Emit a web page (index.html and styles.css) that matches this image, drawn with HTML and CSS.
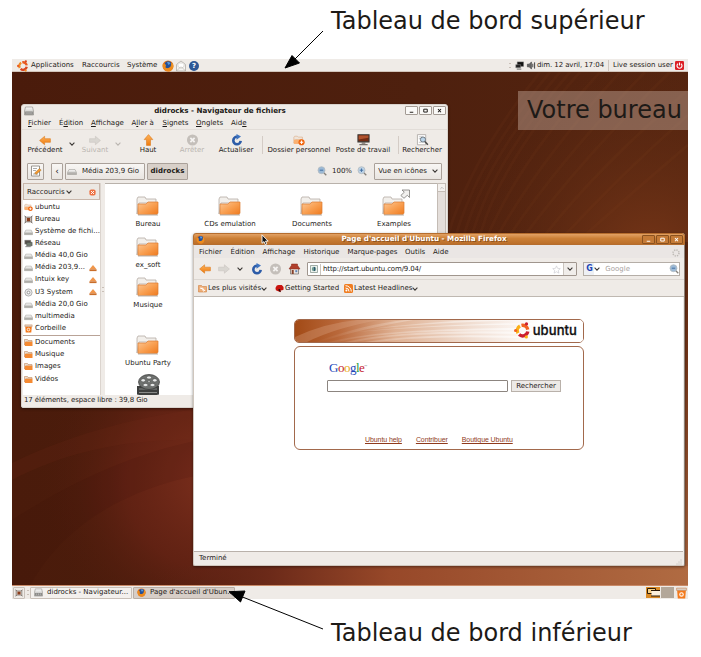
FILE: index.html
```html
<!DOCTYPE html>
<html lang="fr">
<head>
<meta charset="utf-8">
<title>Le bureau Ubuntu</title>
<link rel="stylesheet" href="styles.css">
</head>
<body>
<svg class="sprite" width="0" height="0">
  <defs>
    <linearGradient id="gFolder" x1="0" y1="0" x2="1" y2="1"><stop offset="0" stop-color="#fbc795"/><stop offset=".5" stop-color="#f9a052"/><stop offset="1" stop-color="#ee7a1e"/></linearGradient>
    <linearGradient id="gDrive" x1="0" y1="0" x2="0" y2="1"><stop offset="0" stop-color="#fafafa"/><stop offset="1" stop-color="#b5b3ae"/></linearGradient>
    <linearGradient id="gArrow" x1="0" y1="0" x2="0" y2="1"><stop offset="0" stop-color="#fdb35c"/><stop offset="1" stop-color="#ef7a0c"/></linearGradient>
    <linearGradient id="gBanner" x1="0" y1="0" x2="1" y2="0"><stop offset="0" stop-color="#a24a16"/><stop offset=".15" stop-color="#b9683a"/><stop offset=".35" stop-color="#dfb193"/><stop offset=".6" stop-color="#f0dccf"/><stop offset=".85" stop-color="#fff"/></linearGradient>
    <linearGradient id="gRay" x1="0" y1="0" x2="1" y2="0"><stop offset="0" stop-color="#fff" stop-opacity="0"/><stop offset=".4" stop-color="#fff" stop-opacity=".3"/><stop offset="1" stop-color="#fff" stop-opacity=".8"/></linearGradient>
  </defs>
  <symbol id="folder" viewBox="0 0 24 20"><path d="M2 18V3l1-2h7l1 2h10v4H4z" fill="#f2efeb" stroke="#b5aca4" stroke-width=".8"/><path d="M3 8h8l2-2h10v11l-1 1.500H3z" fill="url(#gFolder)" stroke="#dd7b30" stroke-width=".7"/><path d="M3 19h20" stroke="#b9b2aa"/></symbol>
  <symbol id="folder-s" viewBox="0 0 9 9"><path d="M.5 7V1.500h3l.5 1h4V4H2z" fill="#e9ddd2" stroke="#c08a60" stroke-width=".6"/><path d="M1 3.800h7.500V8H.8z" fill="#f58a32"/></symbol>
  <symbol id="home" viewBox="0 0 14 12"><path d="M1 9V2l1-1h3l1 1h5v3H3z" fill="#eee4da" stroke="#d7a377" stroke-width=".6"/><path d="M1 5h10v5H1z" fill="#fab071"/><circle cx="10" cy="8" r="3.600" fill="#f0640c"/><path d="M8 8h4M10 6v4" stroke="#fff" stroke-width="1.200"/></symbol>
  <symbol id="drive" viewBox="0 0 10 9"><path d="M2 3h6l1.500 3v2h-9V6z" fill="url(#gDrive)" stroke="#a09e99" stroke-width=".6"/><path d="M1 6.500h8" stroke="#8d8b87" stroke-width=".6"/></symbol>
  <symbol id="cabinet" viewBox="0 0 10 10"><path d="M1.500 1h7L9.500 5v4h-9V5z" fill="url(#gDrive)" stroke="#8a8884" stroke-width=".6"/><path d="M1.200 5.500h7.600v3H1.200z" fill="#878683"/><path d="M3 6v2M5 6v2M7 6v2" stroke="#ccc" stroke-width=".7"/></symbol>
  <symbol id="desk" viewBox="0 0 10 9"><path d="M1 1h8v7H1z" fill="#eceae6"/><path d="M.5.5l2 1.500h5l2-1.500M.5 8.500L2.500 7h5l2 1.500M1.500 1v7M8.500 1v7" fill="none" stroke="#6d625b" stroke-width=".9"/><path d="M3 2.800h4v3.600H3z" fill="#8a3d1b"/></symbol>
  <symbol id="net" viewBox="0 0 10 9"><path d="M.7.7h7v4.600h-7z" fill="#55504b" stroke="#bbb" stroke-width=".5"/><path d="M3 3.200h6v3.800H3z" fill="#6f7a6c" stroke="#444" stroke-width=".6"/><path d="M1.500 8h6" stroke="#777"/></symbol>
  <symbol id="disc" viewBox="0 0 10 10"><circle cx="5" cy="5" r="4" fill="#e8e8e8" stroke="#a3a3a3" stroke-width=".9"/><circle cx="5" cy="5" r="1.500" fill="#fff" stroke="#888" stroke-width=".9"/></symbol>
  <symbol id="trash" viewBox="0 0 10 11"><path d="M1 3h8L8.400 10.500H1.600z" fill="#f47a1c"/><path d="M.5 1h9v2.200h-9z" fill="#d9cfc6" stroke="#c77b45" stroke-width=".5"/><circle cx="5" cy="6.800" r="1.600" fill="none" stroke="#fff" stroke-width="1"/></symbol>
  <symbol id="eject" viewBox="0 0 9 9"><path d="M4.500 1L8.500 6h-8z" fill="#f0964b"/><path d="M.5 6h8V8h-8z" fill="#c96d29"/></symbol>
  <symbol id="left" viewBox="0 0 12 10"><path d="M.6 5L5.600.8v2.400h5.800v3.600H5.600v2.400z" fill="url(#gArrow)" stroke="#dc7a1c" stroke-width=".6"/></symbol>
  <symbol id="right-off" viewBox="0 0 12 10"><path d="M11.400 5L6.400.8v2.400H.6v3.600h5.800v2.400z" fill="#d9d6d1" stroke="#c9c5bf" stroke-width=".6"/></symbol>
  <symbol id="up" viewBox="0 0 10 12"><path d="M5 .6L9.300 5.600H7v5.800H3V5.600H.7z" fill="url(#gArrow)" stroke="#dc7a1c" stroke-width=".6"/></symbol>
  <symbol id="stop-off" viewBox="0 0 13 13"><circle cx="6.500" cy="6.500" r="6" fill="#c4bfba"/><path d="M4.200 4.200l4.600 4.600M8.800 4.200L4.200 8.800" stroke="#f5f3f1" stroke-width="1.900"/></symbol>
  <symbol id="reload" viewBox="0 0 12 12"><path d="M6.500 2.800a3.700 3.700 0 1 0 3.700 4" fill="none" stroke="#2d5ca8" stroke-width="2.600"/><path d="M6 0v5.800L10.500 2.600z" fill="#3f74c0"/></symbol>
  <symbol id="monitor" viewBox="0 0 14 13"><path d="M1 .8h12v7.700H1z" fill="#742c14" stroke="#3b3835" stroke-width="1.200"/><path d="M1.800 1.500h10.500v2.500L1.800 6z" fill="#b0522d"/><path d="M5 9h4v1.500H5zM2.500 10.800h9v1.400h-9z" fill="#77716b"/></symbol>
  <symbol id="find" viewBox="0 0 13 13"><path d="M1 .7h9v11H1z" fill="#fff" stroke="#a39e99" stroke-width=".8"/><path d="M2.500 3h4M2.500 5h2M2.500 9h3" stroke="#aaa" stroke-width=".7"/><circle cx="7" cy="6" r="2.800" fill="#b9d3e8" stroke="#68727b" stroke-width="1"/><path d="M9 8l3.300 3.700" stroke="#4b4b4b" stroke-width="1.600"/></symbol>
  <symbol id="zoom" viewBox="0 0 10 10"><circle cx="4.500" cy="4.200" r="3.500" fill="#9bb9d6" stroke="#b3babf" stroke-width=".8"/><path d="M7 7l2.300 2.200" stroke="#85807a" stroke-width="1.300"/><path d="M2.800 4.200h3.400" stroke="#4571a3"/></symbol>
  <symbol id="zoom-in" viewBox="0 0 10 10"><circle cx="4.500" cy="4.200" r="3.500" fill="#bcd2e6" stroke="#b3babf" stroke-width=".8"/><path d="M7 7l2.300 2.200" stroke="#85807a" stroke-width="1.300"/><path d="M2.800 4.200h3.400M4.500 2.500v3.400" stroke="#4571a3"/></symbol>
  <symbol id="edit" viewBox="0 0 12 12"><path d="M1.500 1h8v10h-8z" fill="#fff" stroke="#8f8a84" stroke-width=".9"/><path d="M3 3.500h4M3 5.500h3M3 9h5" stroke="#888" stroke-width=".7"/><path d="M4.500 8l5-4.500 1.700 1.700L6 9.500z" fill="#f3962f" stroke="#8c6a2a" stroke-width=".4"/></symbol>
  <symbol id="chev" viewBox="0 0 6 4"><path d="M.6.7L3 3.100 5.400.7" fill="none" stroke="currentColor" stroke-width="1.100"/></symbol>
  <symbol id="close-o" viewBox="0 0 8 8"><rect x=".5" y=".5" width="7" height="7" rx="2" fill="#ee7040"/><path d="M2.300 2.300l3.400 3.400M5.700 2.300L2.300 5.700" stroke="#fff" stroke-width="1.100"/></symbol>
  <symbol id="firefox" viewBox="0 0 12 12"><circle cx="6" cy="6" r="5.500" fill="#e2731a"/><circle cx="6.200" cy="4.900" r="3.600" fill="#24509a"/><path d="M5 2.200c2-.7 3 .2 3.500 1.300L6.500 5z" fill="#5c9ad8"/><path d="M.8 4c1.400-.6 2.700.2 3.200 1.200L3.400 7.400c1.500 1.400 4.300.8 5.400-1.300L9.500 2.200C12.500 5 11.600 9.500 8 11.200 3.500 12.300 0 8.500.8 4z" fill="#ed8b1e"/><path d="M10 3c1.400 2.500.4 5-1.300 6.200C11 7.500 10.500 5 10 3z" fill="#fbd34c"/></symbol>
  <symbol id="ubuntu" viewBox="0 0 20 20"><g fill="none" stroke-width="4"><path d="M4.700 13A6.200 6.200 0 0 1 7 4.600" stroke="#fbb016"/><path d="M8.800 4A6.200 6.200 0 0 1 16.200 9" stroke="#f26322"/><path d="M16.200 11.200A6.200 6.200 0 0 1 6 14.800" stroke="#cc1f2f"/></g><circle cx="1.900" cy="10" r="1.900" fill="#f26322"/><circle cx="14.700" cy="2.300" r="1.900" fill="#cc1f2f"/><circle cx="14.500" cy="17.600" r="1.900" fill="#fbb016"/></symbol>
  <symbol id="ubuntu-o" viewBox="0 0 20 20"><g fill="none" stroke-width="4"><path d="M4.700 13A6.200 6.200 0 0 1 7 4.600" stroke="#f08a24"/><path d="M8.800 4A6.200 6.200 0 0 1 16.200 9" stroke="#ea5a20"/><path d="M16.200 11.200A6.200 6.200 0 0 1 6 14.800" stroke="#d9431f"/></g><circle cx="1.900" cy="10" r="1.900" fill="#ea5a20"/><circle cx="14.700" cy="2.300" r="1.900" fill="#d9431f"/><circle cx="14.500" cy="17.600" r="1.900" fill="#f08a24"/></symbol>
  <symbol id="mail" viewBox="0 0 11 12"><path d="M1 4.500L5.500 1 10 4.500V11H1z" fill="#f5f4f2" stroke="#b1ada8" stroke-width=".8"/><path d="M2.500 3h6v3.500l-3 2-3-2z" fill="#fff" stroke="#c3bfba" stroke-width=".6"/><path d="M1 11l4-4h1l4 4" fill="none" stroke="#b8b4af" stroke-width=".7"/></symbol>
  <symbol id="speaker" viewBox="0 0 10 10"><path d="M1 3.500h2L5.500 1v8L3 6.500H1z" fill="#666" stroke="#333" stroke-width=".6"/><path d="M7 3v4M9 1.500v7" stroke="#333" stroke-width="1"/></symbol>
  <symbol id="screens" viewBox="0 0 10 10"><path d="M2.500 1h7v5h-7z" fill="#111" stroke="#777" stroke-width=".5"/><path d="M.8 4h5.500v3.500H.8z" fill="#222" stroke="#999" stroke-width=".5"/><path d="M2 9h5" stroke="#777" stroke-width="1.200"/></symbol>
  <symbol id="power" viewBox="0 0 9 9"><rect width="9" height="9" rx="1.200" fill="#dc1f24"/><path d="M3 2.800a2.500 2.500 0 1 0 3 0M4.500 1.500v3" fill="none" stroke="#fff" stroke-width="1.100"/></symbol>
  <symbol id="house" viewBox="0 0 12 12"><path d="M2 5.500h8V11H2z" fill="#eee8e2" stroke="#6f6761" stroke-width=".7"/><path d="M.5 6L3 2.300V1h6v1.300L11.500 6z" fill="#b0402c" stroke="#87291b" stroke-width=".5"/><path d="M3.200 7h2v4h-2z" fill="#85412a"/><path d="M6.800 7.200h2v2h-2z" fill="#5e84b5"/></symbol>
  <symbol id="rss" viewBox="0 0 9 9"><rect width="9" height="9" rx="1.500" fill="#f07c1f"/><circle cx="2.400" cy="6.600" r="1" fill="#fff"/><path d="M1.500 4a3.500 3.500 0 0 1 3.500 3.500M1.500 1.700a5.800 5.800 0 0 1 5.800 5.800" fill="none" stroke="#fff" stroke-width="1"/></symbol>
  <symbol id="feedfolder" viewBox="0 0 9 9"><path d="M.5 8V1.500h3l1 1h4V8z" fill="#efaf79" stroke="#cf7f42" stroke-width=".6"/><path d="M2 4a3.500 3.500 0 0 1 3.500 3.500M4 3.500l3 3.500" fill="none" stroke="#fff"/></symbol>
  <symbol id="mozilla" viewBox="0 0 10 9"><path d="M.5 4L2 1.200 4 .5h3.500l2 2.300v3L8 6.500l-2 .3.500 1.900-3-1.200L1 6.500z" fill="#c9140f"/><path d="M3.500 5.500l2-.5 1 3.500-2-1z" fill="#2b0a08"/></symbol>
  <symbol id="reel" viewBox="0 0 26 22"><path d="M2 12h22v8.500c-6 1.500-16 1.500-22 0z" fill="#3d3f3e"/><path d="M4 15h18M4 18.500h18" stroke="#898b89" stroke-width="1"/><ellipse cx="14" cy="8" rx="10.500" ry="7.500" fill="#6e716f" stroke="#333" stroke-width=".7"/><g fill="#e7e9e8" stroke="#444" stroke-width=".5"><ellipse cx="14" cy="3.500" rx="2.500" ry="1.500"/><ellipse cx="8.200" cy="6.300" rx="2.300" ry="1.600"/><ellipse cx="19.800" cy="6.300" rx="2.300" ry="1.600"/><ellipse cx="10.500" cy="11" rx="2.500" ry="1.600"/><ellipse cx="17.500" cy="11" rx="2.500" ry="1.600"/><circle cx="14" cy="7.500" r="1"/></g></symbol>
  <symbol id="link" viewBox="0 0 10 10"><path d="M2 1h7.500v7.500L7.300 6.300 4 9.300.8 6.500 4.300 3.200z" fill="#f1f0ee" stroke="#6d6b68" stroke-width=".7"/></symbol>
  <symbol id="min" viewBox="0 0 8 8"><path d="M2 6h4" stroke="currentColor" stroke-width="1.100"/></symbol>
  <symbol id="max" viewBox="0 0 8 8"><path d="M2 2.500h4v3.300H2z" fill="none" stroke="currentColor" stroke-width="1.100"/></symbol>
  <symbol id="cls" viewBox="0 0 8 8"><path d="M2.300 2.300l3.400 3.700M5.700 2.300L2.300 6" stroke="currentColor" stroke-width="1.200"/></symbol>
</svg>

<main class="desktop">
  <header class="panel panel-top">
    <svg class="i12 distro"><use href="#ubuntu-o"/></svg>
    <nav class="panel-menu"><span>Applications</span><span>Raccourcis</span><span>Système</span></nav>
    <svg class="launch"><use href="#firefox"/></svg>
    <svg class="launch"><use href="#mail"/></svg>
    <span class="help">?</span>
    <div class="tray">
      <span class="grip"></span>
      <svg class="tray-screen"><use href="#screens"/></svg>
      <svg class="tray-sound"><use href="#speaker"/></svg>
      <span class="clock">dim. 12 avril, 17:04</span>
      <span class="user">Live session user</span>
      <svg class="tray-power"><use href="#power"/></svg>
    </div>
  </header>

  <div class="wallpaper">
    <svg width="676" height="514" viewBox="12 72 676 514">
      <defs>
        <linearGradient id="wBase" x1="0" y1="0" x2="1" y2="0"><stop offset="0" stop-color="#4a1b0b"/><stop offset=".6" stop-color="#4e200e"/><stop offset="1" stop-color="#552510"/></linearGradient>
        <radialGradient id="wRed" gradientUnits="userSpaceOnUse" cx="215" cy="480" r="180"><stop offset="0" stop-color="#7c2f1d"/><stop offset=".5" stop-color="#6a2416" stop-opacity=".7"/><stop offset="1" stop-color="#4a1a0b" stop-opacity="0"/></radialGradient>
        <linearGradient id="wBottom" x1="0" y1="0" x2="1" y2="0"><stop offset=".1" stop-color="#5a2012" stop-opacity="0"/><stop offset=".3" stop-color="#6c2a19"/><stop offset=".5" stop-color="#974829"/><stop offset="1" stop-color="#b06b42"/></linearGradient>
        <linearGradient id="wRight" x1="0" y1="0" x2="0" y2="1"><stop offset="0" stop-color="#733518" stop-opacity="0"/><stop offset=".35" stop-color="#733518"/><stop offset="1" stop-color="#a9653e"/></linearGradient>
        <radialGradient id="wCorner" gradientUnits="userSpaceOnUse" cx="650" cy="255" r="190"><stop offset="0" stop-color="#753517"/><stop offset="1" stop-color="#5b2912" stop-opacity="0"/></radialGradient>
      </defs>
      <path fill="url(#wBase)" d="M12 72h676v514H12z"/>
      <path fill="url(#wCorner)" d="M440 72h248v170H440z"/>
      <path fill="url(#wRed)" d="M12 290h300v295H12z"/>
      <path fill="#7b2d1b" opacity=".15" d="M12 463C80 430 140 418 200 408V440C120 438 60 455 12 480z"/>
      <path fill="#300e07" opacity=".1" d="M12 520C90 470 150 450 200 440V475C120 490 60 530 30 586H12z"/>
      <path fill="url(#wRight)" d="M680 232h8v354h-8z"/>
      <path fill="url(#wBottom)" d="M150 566h538v20H90z"/>
      <g fill="none" stroke="#9b5629" stroke-width="3" opacity=".07"><path d="M448 235Q470 160 540 72M456 235Q478 160 550 72M464 235Q486 160 560 72M472 235Q494 160 570 72M480 235Q502 160 580 72M488 235Q520 160 600 72M498 235Q540 160 620 72M510 235Q560 160 645 72M525 235Q585 155 670 72M545 235Q600 165 688 90M565 235Q620 175 688 115M585 235Q635 190 688 145"/></g>
    </svg>
  </div>

  <footer class="panel panel-bottom">
    <span class="showdesk"><svg class="i9"><use href="#desk"/></svg></span>
    <span class="grip"></span>
    <span class="task"><svg class="i9"><use href="#cabinet"/></svg>didrocks - Navigateur...</span>
    <span class="task active"><svg class="i9"><use href="#firefox"/></svg>Page d'accueil d'Ubun...</span>
    <div class="workspaces"><svg class="ws" viewBox="0 0 14 11"><path d="M0 0h14v11H0z" fill="#d98a26"/><path d="M1.500 1.500h8v5h-8z" fill="#f6cf85" stroke="#2b1a08" stroke-width="1"/><path d="M5.500 3.500h9v5.500h-9z" fill="#fdf1dc"/><path d="M5 3.500h9M5 9h9" stroke="#2b1a08" stroke-width="1"/></svg><span class="ws other"></span><svg class="bin"><use href="#trash"/></svg></div>
  </footer>

  <section class="window files">
    <div class="titlebar"><svg class="i10"><use href="#cabinet"/></svg><h2>didrocks - Navigateur de fichiers</h2><div class="controls"><svg><use href="#min"/></svg><svg><use href="#max"/></svg><svg><use href="#cls"/></svg></div></div>
    <nav class="menu files-menu"><span><u>F</u>ichier</span><span>É<u>d</u>ition</span><span><u>A</u>ffichage</span><span>A<u>l</u>ler à</span><span><u>S</u>ignets</span><span><u>O</u>nglets</span><span>Aid<u>e</u></span></nav>
    <div class="tools">
      <div class="tool"><svg class="ic-w"><use href="#left"/></svg>Précédent</div>
      <svg class="chev"><use href="#chev"/></svg>
      <div class="tool off"><svg class="ic-w"><use href="#right-off"/></svg>Suivant</div>
      <svg class="chev off"><use href="#chev"/></svg>
      <div class="tool"><svg class="ic"><use href="#up"/></svg>Haut</div>
      <div class="tool off"><svg class="ic"><use href="#stop-off"/></svg>Arrêter</div>
      <div class="tool"><svg class="ic"><use href="#reload"/></svg>Actualiser</div>
      <i class="vsep"></i>
      <div class="tool"><svg class="ic-w"><use href="#home"/></svg>Dossier personnel</div>
      <div class="tool"><svg class="ic"><use href="#monitor"/></svg>Poste de travail</div>
      <i class="vsep"></i>
      <div class="tool"><svg class="ic"><use href="#find"/></svg>Rechercher</div>
    </div>
    <div class="location">
      <span class="btn edit"><svg class="i12"><use href="#edit"/></svg></span>
      <span class="btn back">‹</span>
      <span class="btn crumb"><svg class="i10"><use href="#drive"/></svg>Média 203,9 Gio</span>
      <span class="btn here">didrocks</span>
      <div class="zoomer"><svg class="i10"><use href="#zoom"/></svg><span>100%</span><svg class="i10"><use href="#zoom-in"/></svg></div>
      <span class="btn view">Vue en icônes<svg class="chev"><use href="#chev"/></svg></span>
    </div>
    <div class="browse">
      <aside class="places">
        <div class="places-head">Raccourcis<svg class="chev"><use href="#chev"/></svg><svg class="x"><use href="#close-o"/></svg></div>
        <ul>
          <li><svg><use href="#home"/></svg>ubuntu</li>
          <li><svg><use href="#desk"/></svg>Bureau</li>
          <li><svg><use href="#drive"/></svg>Système de fichi...</li>
          <li><svg><use href="#net"/></svg>Réseau</li>
          <li><svg><use href="#drive"/></svg>Média 40,0 Gio</li>
          <li><svg><use href="#drive"/></svg>Média 203,9...<svg class="ej"><use href="#eject"/></svg></li>
          <li><svg><use href="#drive"/></svg>Intuix key<svg class="ej"><use href="#eject"/></svg></li>
          <li><svg><use href="#disc"/></svg>U3 System<svg class="ej"><use href="#eject"/></svg></li>
          <li><svg><use href="#drive"/></svg>Média 20,0 Gio</li>
          <li><svg><use href="#drive"/></svg>multimedia</li>
          <li><svg><use href="#trash"/></svg>Corbeille</li>
        </ul>
        <ul class="marks">
          <li><svg><use href="#folder-s"/></svg>Documents</li>
          <li><svg><use href="#folder-s"/></svg>Musique</li>
          <li><svg><use href="#folder-s"/></svg>Images</li>
          <li><svg><use href="#folder-s"/></svg>Vidéos</li>
        </ul>
      </aside>
      <div class="handle"><span class="grip"></span></div>
      <div class="icons">
        <div class="item"><svg><use href="#folder"/></svg>Bureau</div>
        <div class="item"><svg><use href="#folder"/></svg>CDs emulation</div>
        <div class="item"><svg><use href="#folder"/></svg>Documents</div>
        <div class="item"><svg><use href="#folder"/></svg>Examples<svg class="emblem"><use href="#link"/></svg></div>
        <div class="item first"><svg><use href="#folder"/></svg>ex_soft</div>
        <div class="item first"><svg><use href="#folder"/></svg>Musique</div>
        <div class="item first"><svg><use href="#folder"/></svg>Ubuntu Party</div>
        <div class="item first"><svg class="film"><use href="#reel"/></svg></div>
      </div>
      <div class="scroll"><span><svg class="chev flip"><use href="#chev"/></svg></span></div>
    </div>
    <div class="status">17 éléments, espace libre : 39,8 Gio</div>
  </section>

  <section class="window web">
    <div class="titlebar orange"><svg class="i9"><use href="#firefox"/></svg><h2>Page d'accueil d'Ubuntu - Mozilla Firefox</h2><div class="controls"><svg><use href="#min"/></svg><svg><use href="#max"/></svg><svg><use href="#cls"/></svg></div></div>
    <nav class="menu web-menu"><span>Fichier</span><span>Édition</span><span>Affichage</span><span>Historique</span><span>Marque-pages</span><span>Outils</span><span>Aide</span><svg class="throb" viewBox="0 0 8 8"><circle cx="4" cy="4" r="3" fill="none" stroke="#bdb9b4" stroke-width="1.500" stroke-dasharray="1.300 1.060"/></svg></nav>
    <div class="navbar">
      <svg class="ic-w"><use href="#left"/></svg>
      <svg class="ic-w"><use href="#right-off"/></svg>
      <svg class="chev"><use href="#chev"/></svg>
      <svg class="ic"><use href="#reload"/></svg>
      <svg class="ic"><use href="#stop-off"/></svg>
      <svg class="ic"><use href="#house"/></svg>
      <div class="url"><svg class="fav" viewBox="0 0 8 8"><path d="M.5.5h7v7h-7z" fill="#eef2ee" stroke="#8b9a92" stroke-width=".8"/><circle cx="4" cy="4" r="2.200" fill="#6f9c92"/><path d="M4.500 2v4" stroke="#2d5470" stroke-width="1"/></svg><span>http://start.ubuntu.com/9.04/</span><svg class="star" viewBox="0 0 10 10"><path d="M5 1l1.200 2.700 3 .3L7 6l.7 3L5 7.500 2.300 9 3 6 .8 4l3-.3z" fill="#fff" stroke="#c9c9cf" stroke-width=".7"/></svg><i><svg class="chev"><use href="#chev"/></svg></i></div>
      <div class="search"><b>G</b><svg class="chev"><use href="#chev"/></svg><span>Google</span><svg class="i10"><use href="#zoom"/></svg></div>
    </div>
    <div class="bookmarks">
      <svg class="i9"><use href="#feedfolder"/></svg><span class="bm1">Les plus visités<svg class="chev"><use href="#chev"/></svg></span>
      <svg class="i9"><use href="#mozilla"/></svg><span class="bm2">Getting Started</span>
      <svg class="i9"><use href="#rss"/></svg><span>Latest Headlines<svg class="chev"><use href="#chev"/></svg></span>
    </div>
    <div class="page">
      <div class="banner">
        <svg class="rays" viewBox="0 0 288 22" preserveAspectRatio="none"><path fill="url(#gBanner)" d="M0 0h288v22H0z"/><g fill="url(#gRay)"><path d="M20 22Q70 4 110 0h8Q70 8 24 22zM34 22Q90 6 288 8V11Q100 7 42 22zM50 22Q120 6 288 14v2Q120 9 60 22zM70 22Q140 10 288 19v2Q150 13 82 22zM75 9Q160 -2 230 0h30Q170 0 75 9zM60 12Q160 2 288 3v2Q170 3 60 12z"/></g><path d="M0 17Q30 3 62 0h22Q40 8 12 22H0z" fill="#e0b091" opacity=".3"/></svg>
        <div class="brand"><svg><use href="#ubuntu"/></svg><span>ubuntu</span></div>
      </div>
      <div class="box">
        <div class="google"><span class="gb">G</span><span class="gr">o</span><span class="gy">o</span><span class="gb">g</span><span class="gg">l</span><span class="gr">e</span><sup>™</sup></div>
        <form class="query"><span class="field"></span><span class="submit">Rechercher</span></form>
        <div class="links"><a>Ubuntu help</a><a>Contribuer</a><a>Boutique Ubuntu</a></div>
      </div>
    </div>
    <div class="status">Terminé<svg class="resize" viewBox="0 0 6 6"><path d="M5 1v0.100M3 3v.1M5 3v.1M1 5v.1M3 5v.1M5 5v.1" stroke="#b5b0aa" stroke-width="1" stroke-linecap="round"/></svg></div>
  </section>

  <div class="note">Votre bureau</div>
</main>

<svg class="pointer" viewBox="0 0 8 12"><path d="M1 .8v8.500l2-1.700 1.300 3 1.500-.7-1.300-2.800h2.700z" fill="#111" stroke="#fff" stroke-width=".9"/></svg>
<svg class="arrows" width="701" height="657" viewBox="0 0 701 657"><g stroke="#000" stroke-width="1"><path d="M323 31L294 60M323 629L240 596"/><path d="M285 68l7-12.500 7.500 7.500zM229 591.700l16-.7-4.500 11z" fill="#000"/></g></svg>
<div class="callout above">Tableau de bord supérieur</div>
<div class="callout below">Tableau de bord inférieur</div>
</body>
</html>
```
FILE: styles.css
```css
* { box-sizing: border-box; }
body {
  margin: 0;
  width: 701px;
  height: 657px;
  position: relative;
  overflow: hidden;
  background: #fff;
  color: #1d1a17;
  font: 7px/9px "DejaVu Sans", sans-serif;
  white-space: nowrap;
}
svg { display: block; flex: none; }
h2, ul { margin: 0; padding: 0; list-style: none; }
.sprite { position: absolute; }
.i9 { width: 9px; height: 9px; }
.i10 { width: 10px; height: 10px; }
.i12 { width: 12px; height: 12px; }
.ic { width: 13px; height: 12px; }
.ic-w { width: 12px; height: 10px; }
.chev { width: 6px; height: 4px; color: #3c3835; }
.off { color: #bab5b0; }

.desktop {
  position: relative;
  width: 676px;
  height: 540px;
  margin: 59px 0 0 12px;
  display: flex;
  flex-direction: column;
}
.wallpaper { height: 514px; overflow: hidden; }

/* Panels */
.panel { display: flex; align-items: center; background: #efebe7; }
.panel-top { height: 13px; padding: 1px 4px 0 5px; border-bottom: 1px solid #d2c5bb; }
.distro { margin-right: 2px; }
.panel-menu { display: grid; grid-template-columns: 51px 45px 35px; }
.launch { width: 12px; height: 12px; margin-right: 1px; }
.help {
  width: 10px; height: 10px; margin-left: 1px;
  border-radius: 50%;
  background: #2c5796; color: #fff;
  font-weight: bold; line-height: 10px; text-align: center;
}
.tray { display: flex; align-items: center; margin-left: auto; }
.grip { width: 2px; height: 5px; border: solid #c9bfb7; border-width: 1px 0; }
.tray-screen { width: 9px; height: 9px; margin-left: 4px; }
.tray-sound { width: 10px; height: 9px; margin: 0 1px 0 2px; }
.clock { width: 72px; height: 11px; line-height: 11px; border-right: 1px solid #cfc6bf; margin-right: 4px; letter-spacing: -.08px; }
.user { width: 62px; }
.tray-power { width: 9px; height: 9px; }
.panel-bottom { height: 13px; padding: 0 1px 0 1px; box-shadow: 0 -1px #c98a68; }
.showdesk { width: 12px; height: 12px; padding: 1px; border: 1px solid #c9c1ba; border-radius: 1px; margin-right: 2px; }
.showdesk svg { width: 8px; height: 8px; }
.task {
  display: flex; align-items: center; gap: 4px;
  width: 102px; height: 12px; margin-left: 1px; padding-left: 3px;
  border: 1px solid #c9c0b8; border-radius: 1px; background: #f3f0ed;
}
.task.active { background: #d7cec7; border-color: #b9aea5; }
.workspaces { display: flex; align-items: center; gap: 1px; margin-left: auto; }
.ws { width: 14px; height: 11px; }
.ws.other { width: 13px; background: #b3a799; }
.bin { width: 11px; height: 12px; margin-left: 1px; }

/* Window frame */
.window {
  position: absolute;
  display: flex; flex-direction: column;
  background: #efebe7;
  border-radius: 3px 3px 2px 2px;
  box-shadow: 0 1px 3px rgba(0, 0, 0, .45);
}
.files { left: 9px; top: 45px; width: 427px; height: 304px; border: 1px solid #d8d2cc; }
.web { left: 181px; top: 174px; width: 492px; height: 333px; border: 1px solid #cfc6bd; border-top: 0; border-right-color: #8d8178; }
.titlebar { display: flex; align-items: center; height: 11px; padding: 0 1px 0 2px; }
.titlebar h2 { flex: 1; margin-left: -9px; font-size: 7.150px; line-height: 10px; text-align: center; }
.controls { display: flex; gap: 1px; margin-left: -10px; }
.controls svg { width: 13px; height: 9px; border: 1px solid #a39b94; border-radius: 1px; background: #faf9f7; }
.orange {
  height: 12px;
  margin: 0 -1px;
  border-radius: 3px 3px 0 0;
  background: linear-gradient(#e2a164, #cb7f36 45%, #bb6f2a);
  border: 1px solid #b56d2e;
  color: #fff;
}
.orange h2 { text-shadow: 1px 1px #8b5220; font-size: 7.200px; }
.orange .controls svg { background: #c57b37; border-color: #8b521f; }
.menu { display: grid; height: 13px; align-items: center; }
.files-menu { padding: 2px 0 0 6px; grid-template-columns: 31px 32px 40.500px 31px 33.500px 35px 30px; }
.menu u { text-decoration-thickness: .7px; text-underline-offset: 1px; }

/* File manager */
.tools {
  display: grid; align-items: center;
  grid-template-columns: 44px 10px 36px 10px 50px 38px 50px 2px 72px 56px 14px 34px;
  height: 30px; padding-left: 1px;
  border-top: 1px solid #e2ddd8;
}
.tools .chev { margin: 0 auto 2px; }
.tool { display: flex; flex-direction: column; align-items: center; margin: 0 -5px; }
.tool svg { height: 12px; }
.tool .ic-w { height: 11px; margin-top: 1px; }
.vsep { width: 1px; height: 18px; margin: 0 auto; background: #d4ccc6; }
.location { display: flex; align-items: center; height: 24px; padding: 0 5px; }
.btn {
  display: flex; align-items: center; justify-content: center;
  height: 17px; border: 1px solid #aaa19a; border-radius: 1px;
  background: linear-gradient(#f8f6f4, #e9e5e1);
}
.edit { width: 17px; }
.back { width: 12px; margin-left: 7px; font-size: 9px; }
.crumb { width: 80px; gap: 5px; margin-left: 2px; }
.crumb svg { margin-left: -4px; }
.here { width: 41px; margin-left: 2px; background: #d8d0c9; font-weight: bold; letter-spacing: .05px; }
.zoomer { display: flex; align-items: center; gap: 5px; margin-left: auto; }
.zoomer span { width: 20px; }
.view { width: 68px; margin-left: 7px; gap: 5px; }
.browse { display: flex; height: 212px; padding: 0 1px; }
.places { width: 78px; background: #fff; border-right: 1px solid #dbd4ce; }
.places-head {
  display: flex; align-items: center; gap: 1px;
  height: 17px; padding: 1px 3px 0;
  background: #ece8e3; border: 1px solid #c9b7ab;
}
.x { width: 7px; height: 7px; margin-left: auto; }
.places ul { padding-top: 1px; }
.places li { display: flex; align-items: center; gap: 2px; height: 12.150px; padding: 0 2px 0 1px; }
.places li svg { width: 9px; height: 9px; }
.places li .ej { width: 8px; height: 8px; margin: 0 1px 0 auto; }
.places .marks { border-top: 1px solid #b9a397; }
.handle { display: flex; align-items: center; justify-content: center; width: 4px; }
.icons {
  flex: 1; display: grid; overflow: hidden;
  grid-template-columns: repeat(4, 82px);
  grid-template-rows: 41px 40px 58px 39px 40px;
  padding: 12px 0 0 2px;
  border-top: 1px solid #b9b2ab;
  background: #fff;
}
.item { position: relative; display: flex; flex-direction: column; align-items: center; }
.item > svg:first-child { width: 24px; height: 20px; margin: 0 2px 4px 0; }
.item > .film:first-child { width: 26px; height: 22px; margin: 0; }
.item.first { grid-column: 1; }
.emblem { position: absolute; left: 47px; top: -7px; width: 10px; height: 10px; }
.scroll { width: 9px; background: #e4deda; border: 1px solid #c4bcb5; }
.scroll span { display: flex; align-items: center; justify-content: center; height: 8px; border-bottom: 1px solid #c4bcb5; background: #f4f1ee; }
.flip { transform: scaleY(-1); width: 4px; color: #aaa; }
.status { flex: 1; display: flex; align-items: center; padding: 0 2px; }
.files .status { letter-spacing: -.09px; padding-bottom: 1px; }

/* Browser */
.web-menu { height: 13px; padding: 2px 0 0 5px; grid-template-columns: 31.500px 32px 41px 44px 57.500px 28px 1fr 12px; background: #eae6e4; }
.throb { width: 8px; height: 8px; }
.navbar { display: flex; align-items: center; height: 22px; padding: 1px 4px 0 5px; border-bottom: 1px solid #dcd7d2; }
.navbar > .ic-w { margin-right: 7px; }
.navbar > .chev { margin-right: 7px; }
.navbar > .ic { margin-right: 6px; }
.url { display: flex; align-items: center; width: 271px; height: 14px; border: 1px solid #a0968e; border-radius: 1px; background: #fff; }
.fav { width: 8px; height: 8px; margin: 0 2px 0 2px; }
.url span { flex: 1; height: 11px; line-height: 11px; padding-left: 2px; border-left: 1px solid #c9c4be; letter-spacing: -.15px; }
.star { width: 9px; height: 9px; margin-right: 2px; }
.url i { display: flex; align-items: center; justify-content: center; width: 13px; height: 12px; border-left: 1px solid #cbc5bf; background: #f0edea; }
.search { display: flex; align-items: center; width: 97px; height: 14px; margin-left: 6px; border: 1px solid #b5aea7; background: #fff; }
.search b { width: 10px; padding-left: 2px; height: 12px; line-height: 12px; background: #eef0f4; color: #2145b4; font-size: 8px; }
.search .chev { margin-right: 5px; }
.search span { flex: 1; color: #aaa49f; }
.bookmarks { display: flex; align-items: center; height: 17px; padding: 1px 0 0 4px; gap: 1px; border-bottom: 1px solid #bfb8b1; }
.bookmarks span { display: flex; align-items: center; }
.bm1 { width: 66px; }
.bm2 { width: 58px; }
.page { height: 255px; margin-right: 1px; padding: 22px 0 0 100px; background: #fff; border-bottom: 1px solid #b9b1aa; }
.banner { position: relative; width: 290px; height: 24px; border: 1px solid #a2694c; border-radius: 5px; overflow: hidden; }
.rays { width: 288px; height: 22px; }
.brand { position: absolute; right: 6px; top: 2px; display: flex; align-items: center; gap: 2px; color: #111; }
.brand svg { width: 17px; height: 17px; }
.brand span { margin-top: -2px; font: 500 13px/16px Inter, sans-serif; letter-spacing: .1px; -webkit-text-stroke: .3px #111; }
.box { width: 290px; height: 104px; margin-top: 3px; padding: 13px 22px 0 32px; border: 1px solid #a2694c; border-radius: 6px; }
.google { display: flex; height: 20px; padding-left: 2px; font: 13px/15px "Liberation Serif", serif; letter-spacing: -.5px; }
.google sup { font-size: 3px; line-height: 13px; color: #777; }
.gb { color: #1c47b8; } .gr { color: #c4202d; } .gy { color: #e8a914; } .gg { color: #1f9a3c; }
.query { display: flex; gap: 3px; margin: 0; }
.field { width: 181px; height: 12px; border: 1px solid #8c8580; border-radius: 1px; background: #fff; }
.submit { width: 50px; height: 12px; line-height: 10px; text-align: center; border: 1px solid #b9b1aa; background: #edeae7; }
.links { display: flex; gap: 14px; margin: 44px 0 0 38px; font: 7px/8px "Liberation Sans", sans-serif; letter-spacing: -.08px; color: #8f3a1c; }
.links a { text-decoration: underline; text-underline-offset: 1px; }
.web .status { padding: 0 2px 0 5px; }
.resize { width: 6px; height: 6px; margin: 6px 0 0 auto; }

/* Annotations */
.note {
  position: absolute; left: 506px; top: 32px; width: 170px; height: 39px;
  padding-left: 9px;
  background: rgba(184, 156, 142, .5);
  font-size: 24px; line-height: 38px;
}
.callout { position: absolute; left: 331px; font-size: 24px; line-height: 28px; }
.above { top: 7px; }
.below { top: 619px; }
.pointer { position: absolute; left: 261px; top: 234px; width: 8px; height: 12px; }
.arrows { position: absolute; left: 0; top: 0; }
```
